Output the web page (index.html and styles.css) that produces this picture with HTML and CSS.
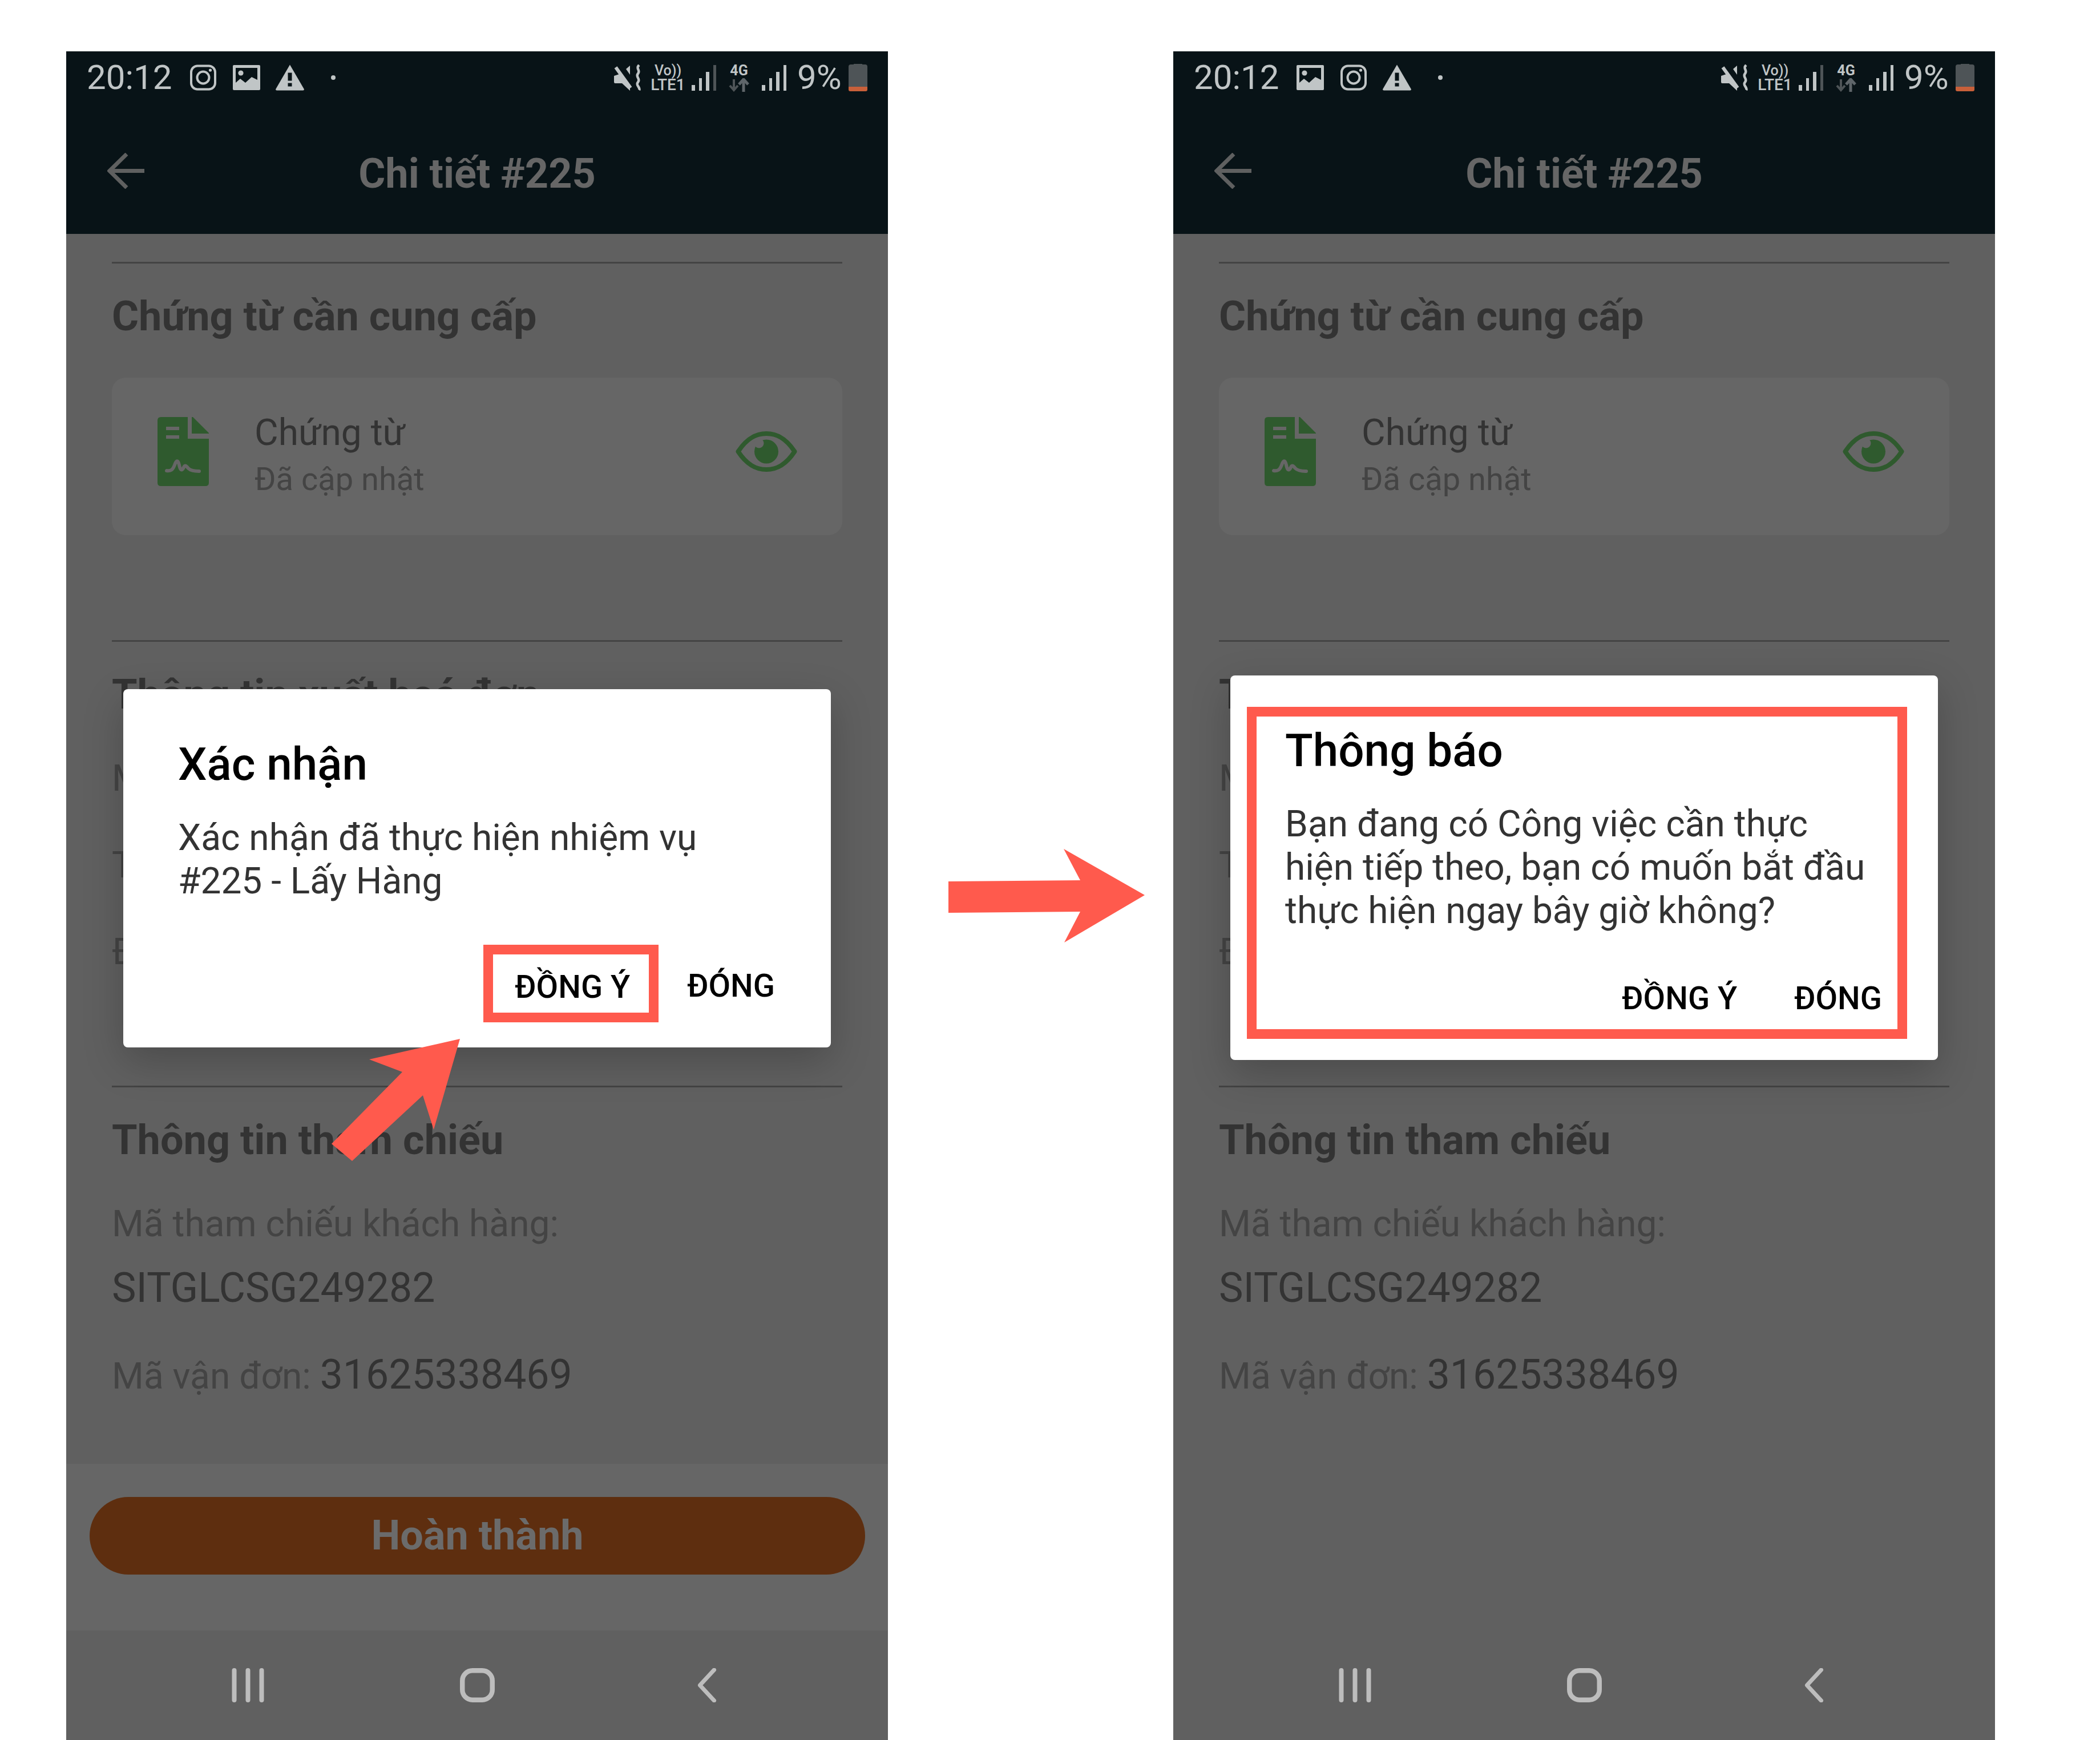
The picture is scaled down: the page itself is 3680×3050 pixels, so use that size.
FILE: index.html
```html
<!DOCTYPE html>
<html lang="vi">
<head>
  <meta charset="UTF-8">
  <title>Chi tiết #225</title>
  <link rel="stylesheet" href="styles.css">
</head>
<body>
  <svg class="defs" width="0" height="0">
    <symbol id="i-insta" viewBox="0 0 47 46">
      <rect x="2.500" y="2.500" width="42" height="41" rx="11" fill="none" stroke="currentColor" stroke-width="4"/>
      <circle cx="23.500" cy="23" r="10.500" fill="none" stroke="currentColor" stroke-width="4"/>
      <circle cx="36" cy="10" r="2.600" fill="currentColor"/>
    </symbol>
    <symbol id="i-image" viewBox="0 0 48 44">
      <rect width="48" height="44" rx="2" fill="currentColor"/>
      <path d="M5 5H43V26L33 21L22 31L13 24L5 31Z" fill="#081317"/>
      <circle cx="14" cy="14" r="4.600" fill="currentColor"/>
    </symbol>
    <symbol id="i-warn" viewBox="0 0 50 45">
      <path d="M25 0L50 43Q50 45 48 45H2Q0 45 0 43Z" fill="currentColor"/>
      <rect x="21.500" y="14" width="7" height="14" fill="#081317"/>
      <rect x="21.500" y="32" width="7" height="6" fill="#081317"/>
    </symbol>
    <symbol id="i-mute" viewBox="0 0 48 46">
      <path d="M0 20L9 17L28 40V46L14 33H2Q0 33 0 31Z" fill="currentColor"/>
      <path d="M21 8L28 2V18Z" fill="currentColor"/>
      <path d="M3 5L29 41" stroke="currentColor" stroke-width="6" fill="none"/>
      <path d="M44 1C37 7 47 10 42 16C37 22 47 25 42 31C37 37 47 40 44 45" stroke="currentColor" stroke-width="4.500" fill="none"/>
    </symbol>
    <symbol id="i-arrows" viewBox="0 0 36 24">
      <path d="M9 2V20M2 13L9 21L16 13" stroke="#4e5457" stroke-width="4" fill="none"/>
      <path d="M26 24V3M18 11L26 2L34 11" stroke="#5f666a" stroke-width="5" fill="none"/>
    </symbol>
    <symbol id="i-doc" viewBox="0 0 90 121">
      <path d="M6 0H53V38H90V115Q90 121 84 121H6Q0 121 0 115V6Q0 0 6 0Z" fill="currentColor"/>
      <path d="M60 0H62L90 28V29H60Z" fill="currentColor"/>
      <rect x="15" y="17" width="23" height="6" fill="#666"/>
      <rect x="15" y="32" width="23" height="6" fill="#666"/>
      <path d="M16 94C24 95 27 92 30 84C33 75 36 75 38 84C40 94 43 95 46 88C48 84 50 85 54 90C58 94 64 95 73 95" fill="none" stroke="#666" stroke-width="6" stroke-linecap="round"/>
    </symbol>
    <symbol id="i-eye" viewBox="0 0 108 71">
      <path d="M4.500 35.500C20 12 36 4 54 4C72 4 88 12 103.500 35.500C88 59 72 67 54 67C36 67 20 59 4.500 35.500Z" fill="none" stroke="currentColor" stroke-width="8" stroke-linejoin="round"/>
      <ellipse cx="54" cy="35.500" rx="21" ry="21" fill="currentColor"/>
      <circle cx="41" cy="21" r="8.500" fill="#666"/>
    </symbol>
  </svg>

  <main class="page">
    <!-- left phone: confirm dialog -->
    <section class="phone">
      <header class="appbar">
        <div class="status">
          <span class="clock">20:12</span>
          <svg class="st-icon first"><use href="#i-insta"/></svg>
          <svg class="st-icon second"><use href="#i-image"/></svg>
          <svg class="st-icon warn"><use href="#i-warn"/></svg>
          <span class="dot"></span>
          <div class="status-right">
            <svg class="st-mute"><use href="#i-mute"/></svg>
            <div class="volte"><span>Vo))</span><span class="lte">LTE1</span></div>
            <div class="signal dim-last"><i></i><i></i><i></i><i></i></div>
            <div class="net"><span>4G</span><svg class="net-arrows"><use href="#i-arrows"/></svg></div>
            <div class="signal"><i></i><i></i><i></i><i></i></div>
            <span class="percent">9%</span>
            <div class="battery"></div>
          </div>
        </div>
        <div class="titlebar">
          <svg class="back" viewBox="0 0 65 63"><path d="M65 31.500H5M34 2L4 31.500L34 61" fill="none" stroke="currentColor" stroke-width="7"/></svg>
          <h1 class="title">Chi tiết #225</h1>
        </div>
      </header>

      <div class="content">
        <hr class="rule">
        <h2 class="section-title">Chứng từ cần cung cấp</h2>
        <div class="doc-card">
          <svg class="doc-icon"><use href="#i-doc"/></svg>
          <div class="doc-text">
            <div class="doc-name">Chứng từ</div>
            <div class="doc-state">Đã cập nhật</div>
          </div>
          <svg class="eye-icon"><use href="#i-eye"/></svg>
        </div>
        <hr class="rule rule-invoice">
        <h2 class="section-title section-hidden">Thông tin xuất hoá đơn</h2>
        <div class="label row-first">Mã số thuế:</div>
        <div class="label row-next">Tên công ty:</div>
        <div class="label row-next">Địa chỉ:</div>
        <hr class="rule rule-ref">
        <h2 class="section-title">Thông tin tham chiếu</h2>
        <div class="label row-first">Mã tham chiếu khách hàng:</div>
        <div class="value value-code">SITGLCSG249282</div>
        <div class="label row-bill">Mã vận đơn: <span class="value">31625338469</span></div>
      </div>

      <div class="footer"><div class="done">Hoàn thành</div></div>
      <nav class="navbar">
        <svg class="nav-icon" viewBox="0 0 56 60"><path d="M4 4V56M28 4V56M52 4V56" fill="none" stroke="currentColor" stroke-width="8" stroke-linecap="round"/></svg>
        <svg class="nav-icon" viewBox="0 0 65 64"><rect x="4.500" y="4.500" width="56" height="55" rx="19" fill="none" stroke="currentColor" stroke-width="9"/></svg>
        <svg class="nav-icon" viewBox="0 0 34 60"><path d="M30 3L5 30L30 57" fill="none" stroke="currentColor" stroke-width="7" stroke-linecap="round" stroke-linejoin="round"/></svg>
      </nav>

      <div class="dialog dialog-confirm">
        <h3 class="dialog-title">Xác nhận</h3>
        <p class="dialog-body">Xác nhận đã thực hiện nhiệm vụ<br>#225 - Lấy Hàng</p>
        <div class="actions">
          <span class="action action-marked">ĐỒNG Ý</span>
          <span class="action">ĐÓNG</span>
        </div>
      </div>
    </section>

    <!-- right phone: next task dialog -->
    <section class="phone">
      <header class="appbar">
        <div class="status">
          <span class="clock">20:12</span>
          <svg class="st-icon first-img"><use href="#i-image"/></svg>
          <svg class="st-icon second-insta"><use href="#i-insta"/></svg>
          <svg class="st-icon warn"><use href="#i-warn"/></svg>
          <span class="dot"></span>
          <div class="status-right">
            <svg class="st-mute"><use href="#i-mute"/></svg>
            <div class="volte"><span>Vo))</span><span class="lte">LTE1</span></div>
            <div class="signal dim-last"><i></i><i></i><i></i><i></i></div>
            <div class="net"><span>4G</span><svg class="net-arrows"><use href="#i-arrows"/></svg></div>
            <div class="signal"><i></i><i></i><i></i><i></i></div>
            <span class="percent">9%</span>
            <div class="battery"></div>
          </div>
        </div>
        <div class="titlebar">
          <svg class="back" viewBox="0 0 65 63"><path d="M65 31.500H5M34 2L4 31.500L34 61" fill="none" stroke="currentColor" stroke-width="7"/></svg>
          <h1 class="title">Chi tiết #225</h1>
        </div>
      </header>

      <div class="content">
        <hr class="rule">
        <h2 class="section-title">Chứng từ cần cung cấp</h2>
        <div class="doc-card">
          <svg class="doc-icon"><use href="#i-doc"/></svg>
          <div class="doc-text">
            <div class="doc-name">Chứng từ</div>
            <div class="doc-state">Đã cập nhật</div>
          </div>
          <svg class="eye-icon"><use href="#i-eye"/></svg>
        </div>
        <hr class="rule rule-invoice">
        <h2 class="section-title section-hidden">Thông tin xuất hoá đơn</h2>
        <div class="label row-first">Mã số thuế:</div>
        <div class="label row-next">Tên công ty:</div>
        <div class="label row-next">Địa chỉ:</div>
        <hr class="rule rule-ref">
        <h2 class="section-title">Thông tin tham chiếu</h2>
        <div class="label row-first">Mã tham chiếu khách hàng:</div>
        <div class="value value-code">SITGLCSG249282</div>
        <div class="label row-bill">Mã vận đơn: <span class="value">31625338469</span></div>
      </div>

      <div class="footer footer-empty"></div>
      <nav class="navbar">
        <svg class="nav-icon" viewBox="0 0 56 60"><path d="M4 4V56M28 4V56M52 4V56" fill="none" stroke="currentColor" stroke-width="8" stroke-linecap="round"/></svg>
        <svg class="nav-icon" viewBox="0 0 65 64"><rect x="4.500" y="4.500" width="56" height="55" rx="19" fill="none" stroke="currentColor" stroke-width="9"/></svg>
        <svg class="nav-icon" viewBox="0 0 34 60"><path d="M30 3L5 30L30 57" fill="none" stroke="currentColor" stroke-width="7" stroke-linecap="round" stroke-linejoin="round"/></svg>
      </nav>

      <div class="dialog dialog-notice">
        <div class="notice-box">
          <h3 class="dialog-title">Thông báo</h3>
          <p class="dialog-body">Bạn đang có Công việc cần thực<br>hiện tiếp theo, bạn có muốn bắt đầu<br>thực hiện ngay bây giờ không?</p>
          <div class="actions">
            <span class="action">ĐỒNG Ý</span>
            <span class="action">ĐÓNG</span>
          </div>
        </div>
      </div>
    </section>

    <!-- red annotation arrows drawn on top of the screenshots -->
    <svg class="marks" viewBox="0 0 3680 3050">
      <polygon points="806,1821 647,1857 705,1879 581,2005 617,2035 741,1920 760,1980"/>
      <polygon points="1662,1545 1893,1543 1864,1488 2006,1569 1865,1652 1893,1598 1662,1600"/>
    </svg>
  </main>
</body>
</html>
```

FILE: styles.css
```css
* {
  box-sizing: border-box;
}

body {
  margin: 0;
  background: #fff;
  font-family: Roboto, "Liberation Sans", sans-serif;
}

.defs {
  position: absolute;
}

.page {
  position: relative;
  display: flex;
  gap: 500px;
  width: 3680px;
  height: 3050px;
  padding: 90px 0 0 116px;
  overflow: hidden;
}

.phone {
  position: relative;
  display: flex;
  flex-direction: column;
  width: 1440px;
  height: 2960px;
  background: #606060;
  overflow: hidden;
}

/* status bar */
.appbar {
  height: 320px;
  background: #081317;
  flex: none;
}

.status {
  display: flex;
  align-items: center;
  height: 92px;
  padding: 0 36px 0 36px;
  color: #c0c5c6;
}

.clock {
  width: 148px;
  font-size: 60px;
  font-weight: 400;
  line-height: 92px;
  white-space: nowrap;
}

.st-icon {
  width: 48px;
  height: 46px;
}

.first { margin-left: 32px; }
.second { margin-left: 28px; }
.first-img { margin-left: 32px; }
.second-insta { margin-left: 28px; }
.warn { width: 50px; margin-left: 27px; }

.dot {
  width: 8px;
  height: 8px;
  margin-left: 47px;
  border-radius: 50%;
  background: #c0c5c6;
}

.status-right {
  display: flex;
  align-items: center;
  margin-left: auto;
}

.st-mute {
  width: 48px;
  height: 46px;
}

.volte {
  display: flex;
  flex-direction: column;
  align-items: center;
  width: 57px;
  margin-left: 18px;
  font-size: 25px;
  font-weight: 500;
  line-height: 25px;
}

.lte {
  font-size: 28px;
}

.signal {
  display: flex;
  align-items: flex-end;
  gap: 7px;
  height: 45px;
  margin-left: 13px;
}

.signal i {
  display: block;
  width: 5.500px;
  background: #c0c5c6;
}

.signal i:nth-child(1) { height: 10px; }
.signal i:nth-child(2) { height: 22px; }
.signal i:nth-child(3) { height: 33px; }
.signal i:nth-child(4) { height: 45px; }
.dim-last i:nth-child(4) { background: #4e5457; }

.net {
  display: flex;
  flex-direction: column;
  align-items: center;
  width: 36px;
  margin: 0 22px;
  font-size: 25px;
  font-weight: 700;
  line-height: 26px;
}

.net-arrows {
  width: 36px;
  height: 24px;
}

.net + .signal {
  margin-left: 0;
}

.percent {
  width: 78px;
  margin-left: 19px;
  font-size: 60px;
  font-weight: 400;
  line-height: 92px;
  white-space: nowrap;
}

.battery {
  position: relative;
  width: 33px;
  height: 47px;
  margin-left: 12px;
  border-radius: 4px 4px 3px 3px;
  background: linear-gradient(#4e5457 84%, #c8603a 84%);
}

.battery::before {
  content: "";
  position: absolute;
  top: -1px;
  left: 9px;
  width: 15px;
  height: 6px;
  background: #4e5457;
}

/* app bar */
.titlebar {
  display: grid;
  grid-template-columns: 1fr auto 1fr;
  align-items: center;
  height: 228px;
  padding: 0 72px;
  color: #5f6060;
}

.back {
  width: 65px;
  height: 63px;
  margin-top: 7px;
}

.title {
  margin: 18px 0 0;
  font-size: 72px;
  font-weight: 700;
  line-height: 84px;
  color: #666;
}

/* page content */
.content {
  flex: none;
  height: 2156px;
  padding: 49px 80px 0;
  color: #333;
}

.rule {
  height: 3px;
  margin: 0;
  border: 0;
  background: #444;
}

.rule-invoice { margin-top: 184px; }
.rule-ref { margin-top: 196px; }

.section-title {
  margin: 51px 0 0;
  font-size: 72px;
  font-weight: 700;
  line-height: 84px;
  color: #333;
}

/* only the part of this heading above the dialog's top edge shows */
.section-hidden {
  clip-path: inset(10px 0 0 0);
}

.doc-card {
  display: flex;
  align-items: center;
  height: 276px;
  margin-top: 65px;
  padding: 0 79px 18px 80px;
  border-radius: 24px;
  background: #666;
}

.doc-icon {
  width: 90px;
  height: 121px;
  color: #2f5a2e;
}

.doc-text {
  flex: 1;
  margin-left: 80px;
  padding-top: 13px;
}

.doc-name {
  font-size: 64px;
  line-height: 76px;
}

.doc-state {
  margin-top: 9px;
  font-size: 56px;
  line-height: 68px;
  color: #444;
}

.eye-icon {
  width: 108px;
  height: 71px;
  color: #2f5a2e;
}

.label {
  font-size: 64px;
  line-height: 76px;
  color: #444;
}

.row-first { margin-top: 67px; }
.row-next { margin-top: 76px; }
.row-bill { margin-top: 68px; line-height: 84px; }

.value {
  font-size: 71.500px;
  color: #333;
}

.value-code {
  margin-top: 32px;
  line-height: 84px;
}

/* bottom button */
.footer {
  flex: none;
  height: 292px;
  padding: 58px 40px 0 41px;
  background: #666;
}

.footer-empty {
  background: none;
}

.done {
  height: 136px;
  border-radius: 68px;
  background: #5e2e0f;
  font-size: 72px;
  font-weight: 700;
  line-height: 136px;
  text-align: center;
  color: #6b6b6b;
}

.navbar {
  display: grid;
  grid-template-columns: repeat(3, 402px);
  justify-content: center;
  justify-items: center;
  align-items: center;
  flex: 1;
  color: #bdbdbd;
}

.nav-icon {
  height: 60px;
  width: 65px;
}

/* dialogs */
.dialog {
  position: absolute;
  left: 100px;
  width: 1240px;
  border-radius: 8px;
  background: #fff;
  box-shadow: 0 24px 70px rgba(0, 0, 0, 0.22);
  color: #333;
}

.dialog-confirm {
  top: 1118px;
  height: 628px;
  padding: 85px 0 0 96px;
}

.dialog-notice {
  top: 1094px;
  height: 674px;
  padding: 55px 54px 37px 29px;
}

.notice-box {
  height: 582px;
  padding: 13px 27px 0 50px;
  border: 17px solid #ff5a4d;
}

.dialog-title {
  margin: 0;
  font-size: 80px;
  font-weight: 500;
  line-height: 94px;
  color: #000;
}

.dialog-body {
  margin: 44px 0 0;
  font-size: 64px;
  line-height: 76px;
}

.actions {
  display: flex;
  justify-content: flex-end;
  align-items: center;
  font-size: 56px;
  font-weight: 500;
  line-height: 66px;
  color: #000;
}

.action {
  padding-top: 8px;
}

.dialog-confirm .actions {
  gap: 50px;
  margin-top: 73px;
  padding-right: 98px;
}

.notice-box .actions {
  gap: 100px;
  margin-top: 74px;
}

.action-marked {
  padding: 24px 33px 12px 38px;
  border: 17px solid #ff5a4d;
}

/* annotation arrows */
.marks {
  position: absolute;
  top: 0;
  left: 0;
  width: 3680px;
  height: 3050px;
  fill: #ff5a4d;
}
```
